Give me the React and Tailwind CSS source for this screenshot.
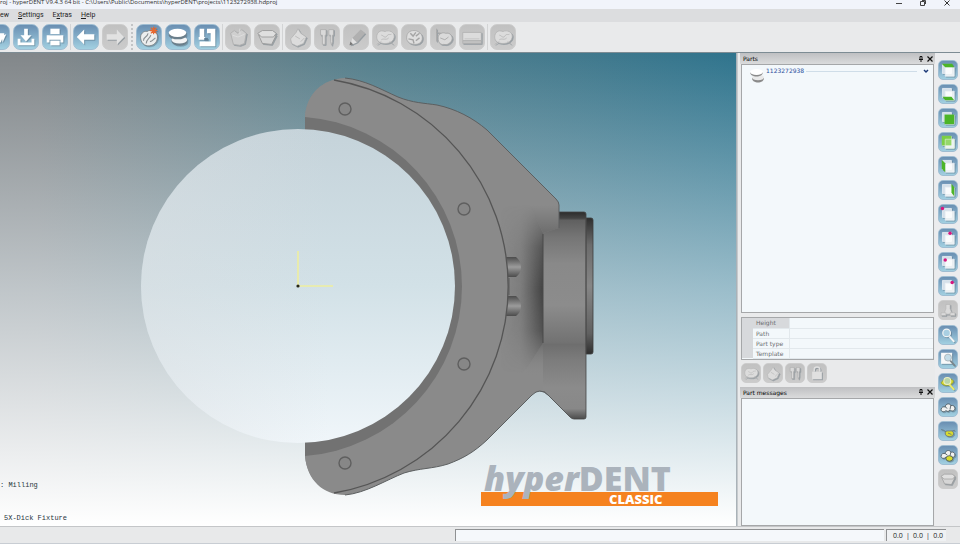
import React from "react";
import clsx from "clsx";

/* ---------- toolbar glyphs, drawn on a 26 x 26 grid ---------- */

const glyphs = {
  open: (
    <path d="M2 11h7l2-2h10l-4 10H2z M18 11l5-1-4 9z" fill="#fff" />
  ),
  save: (
    <g fill="#fff">
      <path d="M11 4h4v7h4l-6 7-6-7h4z" />
      <path d="M4 15h3v4h12v-4h3v7H4z" />
    </g>
  ),
  print: (
    <g fill="#fff">
      <path d="M8 4h10v6H8z" />
      <path d="M4 11h18v8h-3v-3H7v3H4z" />
      <path d="M8 17h10v5H8z" />
      <path d="M7 10.500h12" stroke="#8fb4cb" />
    </g>
  ),
  back: <path d="M3 13l8-8v5h11v6H11v5z" fill="#fff" />,
  forward: <path d="M23 13l-8-8v5H4v6h11v5z" fill="#e2e2e2" />,
  tooth: (
    <g>
      <path
        d="M4 15c-1-5 3-9 7-8 4-3 10 0 11 4 1 5-2 10-6 11-6 2-11-1-12-7z"
        fill="#eceeee"
        stroke="#6e7478"
        strokeWidth="0.800"
      />
      <path d="M7 17c0-5 4-3 5-8M10 20c0-5 4-5 5-9M14 18c3 0 4-3 6-4" fill="none" stroke="#8a9093" strokeWidth="1.200" />
      <path d="M18 2v8M14 6h8M15 3l6 6M21 3l-6 6" stroke="#e8682f" strokeWidth="1.300" />
    </g>
  ),
  discs: (
    <g>
      <path d="M6 16v2c1 6 17 6 17 0v-3z" fill="#6b7f8b" />
      <ellipse cx="14.500" cy="16" rx="8.500" ry="4" fill="#f2f4f5" />
      <path d="M3 9v2c1 6 19 6 19 0V9z" fill="#6b7f8b" />
      <ellipse cx="12.500" cy="8.500" rx="9.500" ry="4.500" fill="#fff" />
    </g>
  ),
  machine: (
    <g fill="#fff">
      <path d="M5 4h5v9h1v3H4v-3h1z" />
      <path d="M13 4h9v19H5v-5h12V9h-4z" />
      <path d="M10 14h4v3h-4z" fill="#5e7f98" />
    </g>
  ),
  cup: (
    <g fill="#cfcfcf" stroke="#b0b0b0">
      <path d="M5 9l4-3 4 3 4-4 5 4-2 11-5 2-7-1z" />
      <path d="M7 11l6 2 7-3M15 4v6" fill="none" stroke="#dedede" />
    </g>
  ),
  bowl: (
    <g fill="#d6d6d6" stroke="#979797" strokeWidth="0.900">
      <path d="M4 11l4 9 10 1 5-10z" />
      <path d="M3 9l5-3h11l4 3-3 4H7z" fill="#dfdfdf" />
    </g>
  ),
  hand: (
    <g fill="#dcdcdc" stroke="#b2b2b2" strokeWidth="0.800">
      <path d="M5 15l6-7 2-4 3 5 6 4-3 7-7 3-6-3z" />
      <path d="M10 12l5 3M16 18l4-4" fill="none" />
    </g>
  ),
  tools: (
    <g fill="#d9d9d9" stroke="#a9a9a9" strokeWidth="0.800">
      <path d="M6 5h6v6h-1v10H8V11H6z" />
      <path d="M15 5h5v6h-1v7l-1 4-1-4v-7h-2z" />
    </g>
  ),
  pencil: (
    <g>
      <path d="M9 14l9-9 5 4-9 10z" fill="#b0b0b0" />
      <path d="M9 14l5 5-7 3z" fill="#e0e0e0" />
      <path d="M7 18l3 3-4 1z" fill="#777" />
    </g>
  ),
  crown: (
    <g fill="#dcdcdc" stroke="#b2b2b2" strokeWidth="0.800">
      <path d="M4 13c0-5 4-8 9-6 5-2 10 1 10 5 0 5-4 8-10 8-5 0-9-2-9-7z" />
      <path d="M9 11c2 0 4 4 6 1s3-1 5-2M4 21l5-3M22 21l-4-3M9 16c3-2 5 1 8-2" fill="none" />
    </g>
  ),
  molar: (
    <g fill="#dedede" stroke="#a4a4a4" strokeWidth="0.800">
      <path d="M5 14c0-6 4-8 8-8s9 3 9 8-4 7-8 7-9-2-9-7z" />
      <path d="M9 9l3 3 3-4M7 15l5 1 1 4M19 14l-4 3M19 9l-4 3" fill="none" strokeWidth="1.500" />
    </g>
  ),
  bridge: (
    <g fill="#dadada" stroke="#a6a6a6" strokeWidth="0.900">
      <path d="M8 12c2-4 6-4 8-3 4-1 7 2 7 6-1 5-6 7-9 6-5 1-7-4-6-9z" />
      <path d="M6 4v14M6 8l5 1M10 14l5 2 4-3" fill="none" />
    </g>
  ),
  block: (
    <g fill="#dcdcdc" stroke="#adadad" strokeWidth="0.800">
      <path d="M3 8h20v9H3z" />
      <path d="M3 17h20v3H3z" fill="#c2c2c2" />
      <path d="M5 15h16" stroke="#bdbdbd" />
    </g>
  ),
  lock: (
    <g>
      <path d="M6 11h14v11H6z" fill="#e0e0e0" />
      <path d="M9 11V8c0-5 8-5 8 0v3" fill="none" stroke="#e0e0e0" strokeWidth="2" />
    </g>
  ),
  person: (
    <g fill="#dadada" stroke="#b1b1b1" strokeWidth="0.800">
      <path d="M10 5h6v6l3 8H7l3-8z" />
      <path d="M3 17h7v4H3zM16 17h7v4h-7z" />
    </g>
  ),
  zoom: (
    <g>
      <path d="M15 15l7 8" stroke="#f3f5f6" strokeWidth="3" />
      <circle cx="11" cy="10" r="5.500" fill="#a9cfe2" stroke="#f1f3f4" strokeWidth="1.800" />
    </g>
  ),
  zoomBox: (
    <g>
      <path d="M3 4h16v16H3z" fill="#f7f8f9" />
      <path d="M16 15l7 8" stroke="#7a868c" strokeWidth="2.500" />
      <circle cx="13" cy="11" r="5" fill="#c3dce8" stroke="#a9b4ba" strokeWidth="1.300" />
    </g>
  ),
  zoomPart: (
    <g>
      <path d="M3 13c2-6 14-9 18-3 0 6-13 10-18 3z" fill="#d3d62f" stroke="#8d962d" />
      <path d="M15 15l7 8" stroke="#eceb66" strokeWidth="2.800" />
      <circle cx="12" cy="10" r="5" fill="#b9d4a8" stroke="#eef0c2" strokeWidth="1.500" />
    </g>
  ),
  chain: (
    <g fill="#f0f1f0" stroke="#46545c" strokeWidth="1.200">
      <path d="M3 17c0-4 4-5 6-4 0-5 7-6 8-2 4-1 6 1 6 4 0 4-5 5-7 2-1 3-5 3-6 1-2 3-7 2-7-1z" />
      <path d="M9 13l3 2M17 11l-1 5" />
    </g>
  ),
  chainOne: (
    <g stroke="#62747c" strokeWidth="1.200">
      <path d="M3 11c5 0 6 4 10 4s6-3 10-3" fill="none" />
      <path d="M9 16c0-4 5-3 6-3 4-1 6 1 6 4s-3 4-6 4-6-1-6-5z" fill="#d8dc2f" />
      <path d="M13 16l5 2" />
    </g>
  ),
  chainAll: (
    <g fill="#f0f1f0" stroke="#46545c" strokeWidth="1.200">
      <path d="M3 15c0-4 4-5 6-4 0-5 7-6 8-2 4-1 6 1 6 4 0 4-5 4-7 2-1 3-5 3-6 1-2 3-7 2-7-1z" />
      <ellipse cx="15" cy="18" rx="5" ry="4" fill="#d8dc2f" />
      <path d="M9 11l3 2M17 9l-1 5" />
    </g>
  ),
};

/* cube with one coloured face */
const faces = {
  top: "M4 4h15l3 5H9z",
  bottom: "M5 17l4 5h13l-4-5z",
  front: "M8 8h14v14H8z",
  rear: "M4 4h14v14H4z",
  left: "M4 4l5 5v13l-5-5z",
  right: "M18 4l4 5v13l-4-5z",
};

const Cube = ({ face, dot }) => (
  <g>
    <path d="M5 5h13v13H5z" fill="#d5e1ea" stroke="#f4f7f9" />
    <path d="M9 9h13v13H9z" fill="#fff" fillOpacity="0.850" stroke="#edf2f5" />
    {face && <path d={faces[face]} fill={face === "rear" ? "#7ccf46" : "#4cb528"} />}
    {face === "rear" && <path d="M9 9h13v13H9z" fill="#fff" fillOpacity="0.200" stroke="#dcefd0" />}
    {dot && <circle cx={dot[0]} cy={dot[1]} r="2.500" fill="#d6167f" />}
  </g>
);

const ToolButton = ({ label, icon, face, dot, small, disabled }) => (
  <button
    type="button"
    aria-label={label}
    disabled={disabled}
    className={clsx(
      "shrink-0 overflow-hidden border",
      small ? "size-5 rounded-[5px]" : "size-[26px] rounded-[7px]",
      disabled
        ? "border-[#cccccc] bg-linear-to-b from-[#c1c1c1] to-[#cbcbcb]"
        : "border-[#9fbdd2] bg-linear-to-b from-[#6a8fb2] to-[#a2d0e1]"
    )}
  >
    <svg viewBox="0 0 26 26" className="size-full drop-shadow-[1px_1px_0px_rgba(60,80,95,0.35)]">
      {icon ? glyphs[icon] : <Cube face={face} dot={dot} />}
    </svg>
  </button>
);

const fileTools = [
  { label: "Open project", icon: "open" },
  { label: "Save project", icon: "save" },
  { label: "Print", icon: "print" },
];
const stepTools = [
  { label: "Back", icon: "back" },
  { label: "Forward", icon: "forward", disabled: true },
];
const partTools = [
  { label: "Add part", icon: "tooth" },
  { label: "Blank", icon: "discs" },
  { label: "Machine", icon: "machine" },
];
const blankTools = [
  { label: "Fixture", icon: "cup", disabled: true },
  { label: "Container", icon: "bowl", disabled: true },
];
const editTools = [
  { label: "Orient", icon: "hand", disabled: true },
  { label: "Tools", icon: "tools", disabled: true },
  { label: "Edit", icon: "pencil", disabled: true },
  { label: "Connectors", icon: "crown", disabled: true },
  { label: "Molar", icon: "molar", disabled: true },
  { label: "Bridge", icon: "bridge", disabled: true },
  { label: "Block", icon: "block", disabled: true },
];

const viewTools = [
  { label: "Top view", face: "top" },
  { label: "Bottom view", face: "bottom" },
  { label: "Front view", face: "front" },
  { label: "Rear view", face: "rear" },
  { label: "Left view", face: "left" },
  { label: "Right view", face: "right" },
  { label: "Corner view 1", dot: [5, 5] },
  { label: "Corner view 2", dot: [16, 6] },
  { label: "Corner view 3", dot: [9, 10] },
  { label: "Corner view 4", dot: [19, 8] },
  { label: "Machine view", icon: "person", disabled: true },
];
const zoomTools = [
  { label: "Zoom", icon: "zoom" },
  { label: "Zoom window", icon: "zoomBox" },
  { label: "Zoom part", icon: "zoomPart" },
  { label: "Show parts", icon: "chain" },
  { label: "Show selected", icon: "chainOne" },
  { label: "Show all", icon: "chainAll" },
  { label: "Show container", icon: "bowl", disabled: true },
];

const Group = ({ tools }) => (
  <div className="flex gap-[3px]">
    {tools.map((t) => (
      <ToolButton key={t.label} {...t} />
    ))}
  </div>
);

const Divider = () => <div className="mx-[2px] h-[26px] w-px bg-[#d3d4d5]" />;

const TitleBar = () => (
  <header className="flex h-[9px] items-center justify-between overflow-hidden bg-[#f1f4fb] pr-[10px]">
    <h1 className="-mt-1 whitespace-nowrap text-[6px] leading-[9px] text-[#2c2c2c]">
      roj - hyperDENT V9.4.3 64 bit - C:\Users\Public\Documents\hyperDENT\projects\1123272938.hdproj
    </h1>
    <div className="-mt-1 flex gap-[18px]">
      <button type="button" aria-label="Minimize">
        <svg viewBox="0 0 6 6" className="size-[6px]" stroke="#444" fill="none">
          <path d="M0 3.500h6" />
        </svg>
      </button>
      <button type="button" aria-label="Restore">
        <svg viewBox="0 0 6 6" className="size-[6px]" stroke="#444" fill="none">
          <path d="M0.500 1.500h4v4h-4zM2 0.500h3.500v3.500" />
        </svg>
      </button>
      <button type="button" aria-label="Close">
        <svg viewBox="0 0 6 6" className="size-[6px]" stroke="#333" fill="none">
          <path d="M0.500 0.500l5 5M5.500 0.500l-5 5" />
        </svg>
      </button>
    </div>
  </header>
);

const MenuBar = () => (
  <nav className="flex h-[13px] items-center gap-[9px] bg-[#dcdddf] font-[Roboto] text-[7px] leading-[13px] text-[#1e1e1e]">
    <button type="button">ew</button>
    <button type="button">
      <u>S</u>ettings
    </button>
    <button type="button">
      E<u>x</u>tras
    </button>
    <button type="button">
      <u>H</u>elp
    </button>
  </nav>
);

const holes = [
  [345, 109],
  [464, 209],
  [464, 364],
  [345, 463],
];

const Scene = () => (
  <svg viewBox="0 53 736 473" className="absolute inset-0 size-full" aria-label="Fixture and blank">
    <defs>
      <linearGradient id="blank" x1="0" y1="0" x2="0" y2="1">
        <stop offset="0" stopColor="#c5d3da" />
        <stop offset="0.500" stopColor="#d2e1e7" />
        <stop offset="1" stopColor="#f0f6fa" />
      </linearGradient>
      <linearGradient id="blankSide" x1="0" y1="0" x2="1" y2="0">
        <stop offset="0" stopColor="#dcdddf" stopOpacity="0.400" />
        <stop offset="0.600" stopColor="#dcdddf" stopOpacity="0" />
      </linearGradient>
      <linearGradient id="neck" x1="0" y1="0" x2="1" y2="0">
        <stop offset="0" stopColor="#484848" stopOpacity="0" />
        <stop offset="0.350" stopColor="#484848" stopOpacity="0.200" />
        <stop offset="0.740" stopColor="#404040" />
      </linearGradient>
      <linearGradient id="neckFade" x1="0" y1="0" x2="0" y2="1">
        <stop offset="0" stopColor="#000" />
        <stop offset="0.250" stopColor="#bbb" />
        <stop offset="0.500" stopColor="#fff" />
        <stop offset="0.750" stopColor="#ccc" />
        <stop offset="1" stopColor="#000" />
      </linearGradient>
      <mask id="neckMask">
        <path d="M500 205h30l13 28v110l-20 30h-23z" fill="url(#neckFade)" />
      </mask>
      <linearGradient id="hub" x1="0" y1="0" x2="0" y2="1">
        <stop offset="0" stopColor="#2c2c2c" />
        <stop offset="0.030" stopColor="#444" />
        <stop offset="0.040" stopColor="#606060" />
        <stop offset="0.120" stopColor="#757575" />
        <stop offset="0.250" stopColor="#898989" />
        <stop offset="0.450" stopColor="#8c8c8c" />
        <stop offset="0.630" stopColor="#727272" />
        <stop offset="0.640" stopColor="#6e6e6e" />
        <stop offset="0.720" stopColor="#7d7d7d" />
        <stop offset="0.850" stopColor="#8b8b8b" />
        <stop offset="0.950" stopColor="#888" />
        <stop offset="1" stopColor="#4c4c4c" />
      </linearGradient>
      <linearGradient id="flange" x1="0" y1="0" x2="0" y2="1">
        <stop offset="0" stopColor="#2e2e2e" />
        <stop offset="0.200" stopColor="#6c6c6c" />
        <stop offset="0.500" stopColor="#868686" />
        <stop offset="0.850" stopColor="#606060" />
        <stop offset="1" stopColor="#2e2e2e" />
      </linearGradient>
      <linearGradient id="pin" x1="0" y1="0" x2="0" y2="1">
        <stop offset="0" stopColor="#4c4c4c" />
        <stop offset="0.500" stopColor="#9b9b9b" />
        <stop offset="1" stopColor="#4c4c4c" />
      </linearGradient>
      <linearGradient id="stepTop" x1="0" y1="0" x2="0" y2="1">
        <stop offset="0" stopColor="#606060" stopOpacity="0" />
        <stop offset="1" stopColor="#5a5a5a" stopOpacity="0.600" />
      </linearGradient>
      <linearGradient id="stepBottom" x1="0" y1="0" x2="0" y2="1">
        <stop offset="0" stopColor="#606060" stopOpacity="0.700" />
        <stop offset="1" stopColor="#8a8a8a" stopOpacity="0" />
      </linearGradient>
    </defs>

    {/* flange behind the hub */}
    <path d="M585 218h6q2 0 2 2v132q0 2-2 2h-6z" fill="url(#flange)" stroke="#3c3c3c" strokeWidth="0.800" />

    {/* hub */}
    <path
      d="M540 212h44q2 0 2 2v203q0 2-2 2h-10q-2 0-4-2l-22-22q-3-4-8-4z"
      fill="url(#hub)"
      stroke="#454545"
      strokeWidth="0.800"
    />

    {/* holder body */}
    <path
      d="M305 130V116C307 93 323 79 345 78C365 80 380 89 398 97C413 103 424 103 437 105C456 109 473 118 487 130L556 199Q559 202 559 205V228L543 233V391Q536 391 532 395L487 440C474 452 464 458 448 464C432 469 420 468 404 473C386 480 366 493 345 495C323 495 307 480 305 456V442A156.500 156.500 0 0 0 305 130Z"
      fill="#8a8a8a"
    />
    <path d="M543 343L526 368V376H543z" fill="url(#stepBottom)" />
    <path
      d="M345 78C365 80 380 89 398 97C413 103 424 103 437 105C456 109 473 118 487 130L556 199Q559 202 559 205V228M548 395Q540 387 532 395L487 440C474 452 464 458 448 464C432 469 420 468 404 473C386 480 366 493 345 495"
      fill="none"
      stroke="#5c5f60"
    />

    {/* shading around the neck */}
    <path d="M500 195h59v180h-59z" fill="url(#neck)" mask="url(#neckMask)" />
    <path d="M530 205H559V228L543 233z" fill="url(#stepTop)" />
    <path d="M543 234V343" stroke="#4b4b4b" />
    <path d="M586 218V354" stroke="#4d4d4d" strokeWidth="0.800" />

    {/* positioning pins */}
    <path d="M505 257h11q5 4 5 10t-5 10h-11z" fill="url(#pin)" />
    <path d="M505 296h11q5 4 5 10t-5 10h-11z" fill="url(#pin)" />
    <path d="M509 278v17" stroke="#5a5a5a" />

    {/* clamping ring */}
    <path
      d="M305 130V116C307 97 318 84 334 80A209.500 209.500 0 0 1 334 493C318 488 307 476 305 456V442z"
      fill="#8a8a8a"
    />
    <path d="M334 80A209.500 209.500 0 0 1 334 493" fill="none" stroke="#555" strokeWidth="1.300" />
    <path d="M305 117A170 170 0 0 1 305 456V430H305z" fill="#727272" />

    {holes.map(([x, y]) => (
      <circle key={`${x}-${y}`} cx={x} cy={y} r="6" fill="#878787" stroke="#5f5f5f" strokeWidth="1.400" />
    ))}

    {/* blank */}
    <circle cx="298" cy="286" r="157" fill="url(#blank)" />
    <circle cx="298" cy="286" r="157" fill="url(#blankSide)" />

    {/* origin */}
    <path d="M298 251v35h35" fill="none" stroke="#eeeea0" strokeWidth="1.600" />
    <circle cx="298" cy="286" r="1.600" fill="#26261a" />

    {/* product mark */}
    <path d="M481 492h237v14H481z" fill="#f5821f" />
    <text x="484" y="491" fill="#abb3bc" className="font-['Open_Sans'] text-[34px] font-extrabold">
      <tspan className="italic">hyper</tspan>DENT
    </text>
    <text x="609" y="504" fill="#fff" className="font-['Open_Sans'] text-[13px] font-extrabold">
      CLASSIC
    </text>
  </svg>
);

const Viewport = () => (
  <main className="relative flex flex-1 flex-col justify-end overflow-hidden border-r border-[#a9b2b8] bg-linear-to-r from-[#82878a] from-5% via-[#557f8c] via-50% to-[#2f748d]">
    <div className="absolute inset-0 bg-linear-to-b from-white/0 via-[#f2f9fd]/55 to-white" />
    <Scene />
    <div className="relative flex flex-col gap-6 pb-[3px] font-['Liberation_Mono'] text-[7px] leading-[9px] text-[#27353d]">
      <p>: Milling</p>
      <p className="pl-1">5X-Dick Fixture</p>
    </div>
  </main>
);

const PanelHeader = ({ title }) => (
  <div className="flex h-[11px] shrink-0 items-center justify-between bg-linear-to-b from-[#bfc0c2] to-[#dadbdc] pr-[2px] pl-[3px]">
    <h2 className="text-[6px] leading-[11px] text-black">{title}</h2>
    <div className="flex gap-[3px]">
      <button type="button" aria-label={`Pin ${title}`}>
        <svg viewBox="0 0 6 6" className="size-[6px]" stroke="#111" fill="none">
          <path d="M2 0.500h2v3H2zM1 3.500h4M3 3.500v2.500" />
        </svg>
      </button>
      <button type="button" aria-label={`Close ${title}`}>
        <svg viewBox="0 0 6 6" className="size-[6px]" stroke="#111" fill="none" strokeWidth="1.200">
          <path d="M0.500 0.500l5 5M5.500 0.500l-5 5" />
        </svg>
      </button>
    </div>
  </div>
);

const PartsPanel = () => (
  <section>
    <PanelHeader title="Parts" />
    <div className="mx-px h-[249px] border border-[#a5a7a9] bg-[#f3f8fb] pt-px">
      <div className="flex items-start gap-px pr-1 pl-[7px]">
        <svg viewBox="0 0 16 16" className="mt-[2px] size-4">
          <path d="M3 10c0 6 12 6 12 0z" fill="#8a8a8a" />
          <ellipse cx="9" cy="9.500" rx="6" ry="2.800" fill="#e9e9e9" />
          <path d="M1 4c0 6 13 6 13 0z" fill="#8a8a8a" />
          <ellipse cx="7.500" cy="4" rx="6.500" ry="3" fill="#fff" />
        </svg>
        <button type="button" className="flex flex-1 items-center gap-[2px]">
          <span className="text-[6px] leading-[10px] text-[#2a4f9c]">1123272938</span>
          <span className="h-px flex-1 bg-[#cfdde8]" />
          <svg viewBox="0 0 6 6" className="ml-1 size-[6px]" fill="none" stroke="#1d3a78" strokeWidth="1.500">
            <path d="M1 2l2 2 2-2" />
          </svg>
        </button>
      </div>
    </div>
  </section>
);

const properties = ["Height", "Path", "Part type", "Template"];

const PropertyTable = () => (
  <div className="mx-px border border-[#a5a7a9] bg-[#f3f8fb]">
    <table className="w-full table-fixed border-collapse text-[6px] leading-[9px] text-[#6b6d70]">
      <tbody>
        {properties.map((name, i) => (
          <tr key={name} className="h-[10px]">
            <td className="w-[11px] bg-[#d7d9dc] p-0" />
            <th
              scope="row"
              className={clsx(
                "w-9 border-b border-[#e2e8ec] p-0 pl-[3px] text-left font-normal whitespace-nowrap",
                i === 0 && "bg-[#d7d9dc]"
              )}
            >
              {name}
            </th>
            <td className="border-b border-l border-[#e2e8ec] p-0" />
          </tr>
        ))}
      </tbody>
    </table>
  </div>
);

const SidePanels = () => (
  <aside className="flex w-[198px] flex-col border-l border-[#c6cacd] pl-[2px] font-['DejaVu_Sans']">
    <PartsPanel />
    <div className="h-1" />
    <PropertyTable />
    <div className="flex gap-[2px] px-px pt-[3px] pb-1">
      <ToolButton small disabled label="Part crown" icon="crown" />
      <ToolButton small disabled label="Part position" icon="hand" />
      <ToolButton small disabled label="Part tools" icon="tools" />
      <ToolButton small disabled label="Lock part" icon="lock" />
    </div>
    <section className="flex flex-1 flex-col">
      <PanelHeader title="Part messages" />
      <div className="mx-px flex-1 border border-[#a5a7a9] bg-[#f3f8fb]" />
    </section>
  </aside>
);

const ViewRail = () => (
  <div className="flex w-[25px] flex-col items-center gap-[5px] bg-[#ebecee] pt-[7px]">
    <div className="flex flex-col gap-1">
      {viewTools.map((t) => (
        <ToolButton key={t.label} small {...t} />
      ))}
    </div>
    <div className="flex flex-col gap-1">
      {zoomTools.map((t) => (
        <ToolButton key={t.label} small {...t} />
      ))}
    </div>
  </div>
);

const StatusBar = () => (
  <footer className="flex h-[18px] items-start justify-end gap-[2px] border-t border-b border-t-[#c4c6c8] border-b-[#c8cdd3] bg-[#e8e9ea] pt-[2px] pr-[14px]">
    <div className="h-3 w-[429px] border-t border-l border-[#8f9193] bg-[#f5f8fb]" />
    <div className="flex h-3 w-[60px] items-center justify-between border-t border-l border-[#8f9193] bg-[#eff1f3] pr-[3px] pl-[6px] text-[7px] leading-[9px] text-[#222]">
      <span>0.0</span>
      <span>|</span>
      <span>0.0</span>
      <span>|</span>
      <span>0.0</span>
    </div>
  </footer>
);

export default function App() {
  return (
    <div className="flex min-h-screen flex-col overflow-hidden bg-[#e9eaeb] font-['Open_Sans',sans-serif]">
      <TitleBar />
      <MenuBar />
      <div className="-ml-4 flex h-[30px] items-start pt-[2px]">
        <Group tools={fileTools} />
        <Divider />
        <Group tools={stepTools} />
        <div className="mx-[3px] h-[26px] border-l-2 border-dotted border-[#c2c4c6]" />
        <Group tools={partTools} />
        <Divider />
        <Group tools={blankTools} />
        <Divider />
        <Group tools={editTools} />
        <Divider />
        <ToolButton disabled label="Calculate" icon="crown" />
      </div>
      <div className="flex flex-1 border-t border-[#7d8c94]">
        <Viewport />
        <SidePanels />
        <ViewRail />
      </div>
      <StatusBar />
    </div>
  );
}
